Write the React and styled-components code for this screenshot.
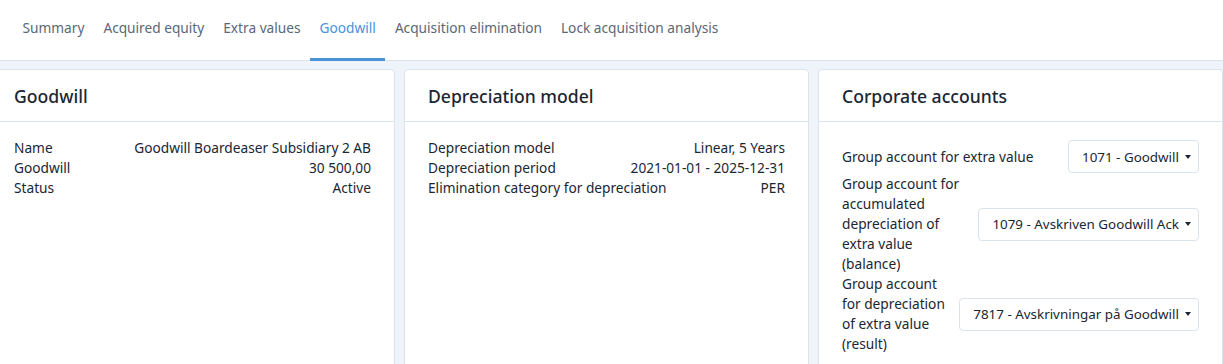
import React from 'react';
import styled, {createGlobalStyle} from 'styled-components';

const colors = {
  page: '#eef4fa',
  border: '#dbe3ec',
  text: '#1b2633',
  tab: '#5a6877',
  active: '#4a93db'
};

const GlobalStyle = createGlobalStyle`
  html, body {
    margin: 0;
    padding: 0;
    background: ${colors.page};
    font-family: "Noto Sans", "Open Sans", sans-serif;
    color: ${colors.text};
    overflow: hidden;
  }
`;

const Page = styled.div`
  width: 1223px;
  min-height: 364px;
`;

const TabBar = styled.nav`
  display: flex;
  height: 60px;
  padding-left: 13px;
  background: #ffffff;
  border-bottom: 1px solid ${colors.border};
`;

const Tab = styled.div`
  display: flex;
  align-items: center;
  box-sizing: border-box;
  height: 61px;
  margin-bottom: -1px;
  padding: 0 9.5px 4px;
  font-size: 13.7px;
  color: ${p => (p.$active ? colors.active : colors.tab)};
  border-bottom: 3px solid ${p => (p.$active ? colors.active : 'transparent')};
`;

const Panels = styled.div`
  display: grid;
  grid-template-columns: repeat(3, 405px);
  gap: 9px;
  margin-left: -10px;
  padding-top: 8px;
`;

const Panel = styled.section`
  background: #ffffff;
  border: 1px solid ${colors.border};
  border-radius: 4px;
  min-height: 320px;
`;

const PanelHead = styled.div`
  display: flex;
  align-items: center;
  height: 51px;
  padding: 0 23px;
  border-bottom: 1px solid ${colors.border};
  font-size: 17.6px;
  font-weight: 500;
`;

const PanelBody = styled.div`
  padding: ${p => p.$top || 16}px 23px 16px;
`;

const Row = styled.div`
  display: flex;
  justify-content: space-between;
  font-size: 13.7px;
  line-height: 20px;
`;

const FieldRow = styled.div`
  display: flex;
  align-items: center;
  justify-content: space-between;
  gap: 11px;
  min-height: 35px;
  font-size: 13.7px;
  line-height: 20px;
`;

const FieldLabel = styled.div`
  flex: 1 1 auto;
`;

const Select = styled.div`
  flex: 0 0 auto;
  display: flex;
  align-items: center;
  gap: 6px;
  height: 33px;
  box-sizing: border-box;
  padding: 0 7px 0 13px;
  border: 1px solid ${colors.border};
  border-radius: 4px;
  font-size: 13.4px;
  white-space: nowrap;
`;

const Caret = styled.span`
  width: 0;
  height: 0;
  border-left: 3.5px solid transparent;
  border-right: 3.5px solid transparent;
  border-top: 4px solid ${colors.text};
`;

const tabs = [
  'Summary',
  'Acquired equity',
  'Extra values',
  'Goodwill',
  'Acquisition elimination',
  'Lock acquisition analysis'
];

const InfoPanel = ({title, rows}) => (
  <Panel>
    <PanelHead>{title}</PanelHead>
    <PanelBody>
      {rows.map(([k, v]) => (
        <Row key={k}>
          <span>{k}</span>
          <span>{v}</span>
        </Row>
      ))}
    </PanelBody>
  </Panel>
);

const accounts = [
  ['Group account for extra value', '1071 - Goodwill'],
  ['Group account for accumulated depreciation of extra value (balance)', '1079 - Avskriven Goodwill Ack'],
  ['Group account for depreciation of extra value (result)', '7817 - Avskrivningar på Goodwill']
];

const App = () => (
  <Page>
    <GlobalStyle />
    <TabBar>
      {tabs.map(t => (
        <Tab key={t} $active={t === 'Goodwill'}>{t}</Tab>
      ))}
    </TabBar>
    <Panels>
      <InfoPanel
        title="Goodwill"
        rows={[
          ['Name', 'Goodwill Boardeaser Subsidiary 2 AB'],
          ['Goodwill', '30 500,00'],
          ['Status', 'Active']
        ]}
      />
      <InfoPanel
        title="Depreciation model"
        rows={[
          ['Depreciation model', 'Linear, 5 Years'],
          ['Depreciation period', '2021-01-01 - 2025-12-31'],
          ['Elimination category for depreciation', 'PER']
        ]}
      />
      <Panel>
        <PanelHead>Corporate accounts</PanelHead>
        <PanelBody $top={17}>
          {accounts.map(([label, value]) => (
            <FieldRow key={value}>
              <FieldLabel>{label}</FieldLabel>
              <Select>
                {value}
                <Caret />
              </Select>
            </FieldRow>
          ))}
        </PanelBody>
      </Panel>
    </Panels>
  </Page>
);

export default App;
